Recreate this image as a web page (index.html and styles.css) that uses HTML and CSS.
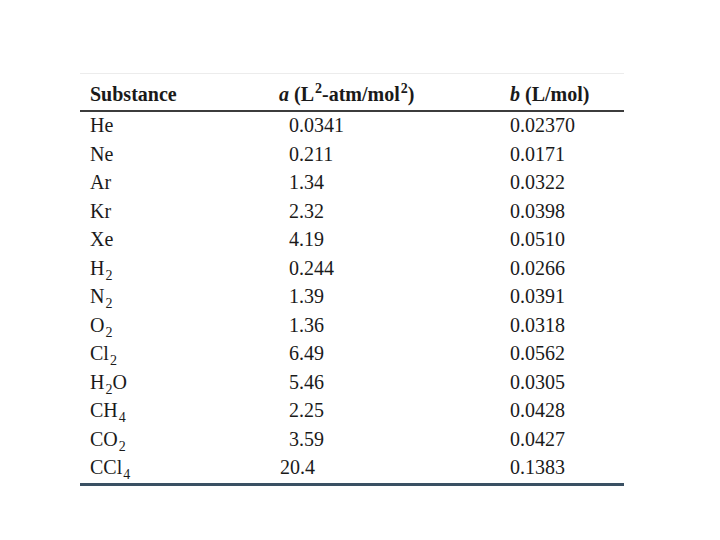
FILE: index.html
```html
<!DOCTYPE html>
<html>
<head>
<meta charset="utf-8">
<link rel="stylesheet" href="styles.css">
</head>
<body>
<div class="page">
<table class="vdw">
  <colgroup>
    <col class="c1"><col class="c2"><col class="c3">
  </colgroup>
  <thead>
    <tr>
      <th class="name">Substance</th>
      <th class="ah"><i>a</i> (L<sup>2</sup>-atm/mol<sup>2</sup>)</th>
      <th class="bh"><i>b</i> (L/mol)</th>
    </tr>
  </thead>
  <tbody>
    <tr><td class="name">He</td><td class="a">0.0341</td><td class="b">0.02370</td></tr>
    <tr><td class="name">Ne</td><td class="a">0.211</td><td class="b">0.0171</td></tr>
    <tr><td class="name">Ar</td><td class="a">1.34</td><td class="b">0.0322</td></tr>
    <tr><td class="name">Kr</td><td class="a">2.32</td><td class="b">0.0398</td></tr>
    <tr><td class="name">Xe</td><td class="a">4.19</td><td class="b">0.0510</td></tr>
    <tr><td class="name">H<sub>2</sub></td><td class="a">0.244</td><td class="b">0.0266</td></tr>
    <tr><td class="name">N<sub>2</sub></td><td class="a">1.39</td><td class="b">0.0391</td></tr>
    <tr><td class="name">O<sub>2</sub></td><td class="a">1.36</td><td class="b">0.0318</td></tr>
    <tr><td class="name">Cl<sub>2</sub></td><td class="a">6.49</td><td class="b">0.0562</td></tr>
    <tr><td class="name">H<sub>2</sub>O</td><td class="a">5.46</td><td class="b">0.0305</td></tr>
    <tr><td class="name">CH<sub>4</sub></td><td class="a">2.25</td><td class="b">0.0428</td></tr>
    <tr><td class="name">CO<sub>2</sub></td><td class="a">3.59</td><td class="b">0.0427</td></tr>
    <tr><td class="name">CCl<sub>4</sub></td><td class="a two">20.4</td><td class="b">0.1383</td></tr>
  </tbody>
</table>
</div>
</body>
</html>
```
FILE: styles.css
```css
html, body {
  margin: 0;
  padding: 0;
  background: #ffffff;
}
.page {
  padding: 73px 0 0 80px;
}
.vdw {
  width: 544px;
  border-collapse: collapse;
  table-layout: fixed;
  font-family: "Liberation Serif", serif;
  font-size: 20px;
  color: #1a1a1a;
  border-top: 1px solid #ececec;
  border-bottom: 3px solid #3a5063;
}
.c1 { width: 190px; }
.c2 { width: 230px; }
.c3 { width: 124px; }
.vdw th {
  font-weight: bold;
  text-align: left;
  padding: 4px 0 0 0;
  height: 32px;
  line-height: 32px;
  border-bottom: 2px solid #3c3c3c;
  white-space: nowrap;
}
.vdw th i { font-weight: bold; }
.vdw td {
  padding: 0 0 2px 0;
  line-height: 26.5px;
  height: 26.5px;
  white-space: nowrap;
}
.name { padding-left: 10px !important; }
.ah { padding-left: 9px !important; }
.bh { padding-left: 10px !important; }
.a { padding-left: 19px !important; }
.a.two { padding-left: 10px !important; }
.b { padding-left: 10px !important; }
sub, sup {
  font-size: 14px;
  line-height: 0;
}
sub { vertical-align: -5px; margin-left: 1px; }
sup { vertical-align: 8px; margin-left: 1px; }
```
